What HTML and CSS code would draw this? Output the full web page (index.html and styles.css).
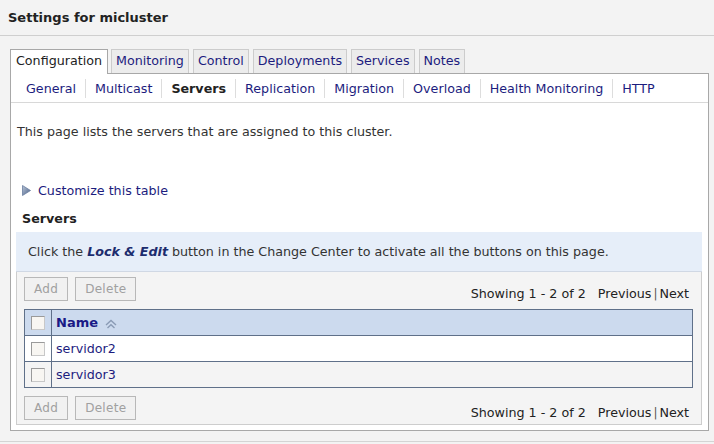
FILE: index.html
```html
<!DOCTYPE html>
<html>
<head>
<meta charset="utf-8">
<link rel="stylesheet" href="styles.css">
</head>
<body>
<div class="header"><h1 class="title">Settings for micluster</h1></div>
<div class="main">
  <div class="tabs">
    <span class="tab active">Configuration</span>
    <span class="tab">Monitoring</span>
    <span class="tab">Control</span>
    <span class="tab">Deployments</span>
    <span class="tab">Services</span>
    <span class="tab">Notes</span>
  </div>
  <div class="panel">
    <div class="subtabs">
      <span class="sub">General</span>
      <span class="sub">Multicast</span>
      <span class="sub current">Servers</span>
      <span class="sub">Replication</span>
      <span class="sub">Migration</span>
      <span class="sub">Overload</span>
      <span class="sub">Health Monitoring</span>
      <span class="sub last">HTTP</span>
    </div>
    <div class="content">
      <p class="intro">This page lists the servers that are assigned to this cluster.</p>
      <div class="customize">
        <svg class="tri" width="9" height="11" viewBox="0 0 9 11"><defs><linearGradient id="g" x1="0" y1="0" x2="1" y2="1"><stop offset="0" stop-color="#b9c6d8"/><stop offset="1" stop-color="#4a5f86"/></linearGradient></defs><path d="M0.5 0.5 L8.5 5.5 L0.5 10.5 Z" fill="url(#g)" stroke="#6a7ea0" stroke-width="0.8"/></svg>
        <span class="link">Customize this table</span>
      </div>
      <div class="section">Servers</div>
      <div class="info">Click the <b class="lock">Lock &amp; Edit</b> button in the Change Center to activate all the buttons on this page.</div>
      <div class="tablebox">
        <div class="controls">
          <div class="buttons"><span class="btn">Add</span><span class="btn">Delete</span></div>
          <div class="paging">Showing 1 - 2 of 2 <span class="pl">Previous</span><span class="bar">|</span>Next</div>
        </div>
        <table class="grid">
          <tr class="head"><th class="cb"><span class="box"></span></th><th class="name">Name <svg class="sort" width="14" height="10" viewBox="0 0 14 10"><path d="M2 6 L7 1.5 L12 6" fill="none" stroke="#8a9bb5" stroke-width="1.4"/><path d="M3.5 9 L7 5.8 L10.5 9" fill="none" stroke="#8a9bb5" stroke-width="1.4"/></svg></th></tr>
          <tr class="row odd"><td class="cb"><span class="box"></span></td><td><span class="link">servidor2</span></td></tr>
          <tr class="row even"><td class="cb"><span class="box"></span></td><td><span class="link">servidor3</span></td></tr>
        </table>
        <div class="controls bottom">
          <div class="buttons"><span class="btn">Add</span><span class="btn">Delete</span></div>
          <div class="paging">Showing 1 - 2 of 2 <span class="pl">Previous</span><span class="bar">|</span>Next</div>
        </div>
      </div>
    </div>
  </div>
</div>
</body>
</html>
```
FILE: styles.css
```css
html, body { margin: 0; padding: 0; }
body {
  background: #f3f3f3;
  font-family: "DejaVu Sans", "Liberation Sans", sans-serif;
  font-size: 12.7px;
  color: #333;
  width: 714px;
  height: 444px;
  overflow: hidden;
}
.header {
  height: 36px;
  border-bottom: 1px solid #cfcfcf;
  box-sizing: border-box;
  padding: 0 8px;
  display: flex;
  align-items: center;
}
.title { margin: 0; font-size: 13px; font-weight: bold; color: #222; }
.main { padding: 13px 5px 10px 10px; border-bottom: 1px solid #d4d4d4; }
.tabs { display: flex; gap: 4px; height: 24px; align-items: flex-end; }
.tab {
  height: 24px;
  box-sizing: border-box;
  border: 1px solid #cccccc;
  border-bottom: none;
  background: #ececec;
  color: #1c1c7e;
  padding: 0 4px;
  line-height: 22px;
}
.tab.active {
  height: 25px;
  background: #fff;
  color: #222;
  border-color: #a8a8a8;
  padding: 0 5px;
  margin-right: -1px;
  margin-bottom: -1px;
  position: relative;
  z-index: 1;
}
.panel {
  background: #fff;
  border: 1px solid #a8a8a8;
}
.subtabs {
  display: flex;
  align-items: center;
  height: 28px;
  border-bottom: 1px solid #d8d8d8;
  padding-left: 6px;
}
.sub {
  color: #1c1c7e;
  padding: 0 9px;
  border-right: 1px solid #dddddd;
  line-height: 19px;
  margin-top: 1px;
}
.sub.last { border-right: none; }
.sub.current { color: #222; font-weight: bold; }
.content { padding: 0 6px 5px 5px; }
.intro { margin: 20px 0 0 1px; height: 18px; line-height: 18px; }
.customize { margin: 40px 0 0 6px; display: flex; align-items: center; gap: 7px; height: 18px; }
.tri { display: block; }
.link { color: #1c1c7e; }
.section { margin: 11px 0 0 6px; font-weight: bold; color: #222; height: 18px; line-height: 18px; }
.info {
  margin-top: 4px;
  background: #e6eef9;
  height: 39px;
  line-height: 39px;
  padding-left: 12px;
  border-bottom: 1px solid #d0d8e4;
}
.lock { color: #1c2c6e; font-style: italic; }
.tablebox {
  background: #f4f4f4;
  border: 1px solid #cdcdcd;
  border-top: none;
  padding: 5px 8px 4px 7px;
}
.controls { display: flex; justify-content: space-between; align-items: center; height: 24px; }
.controls.bottom { margin-top: 8px; }
.buttons { display: flex; gap: 7px; }
.btn {
  height: 24px;
  box-sizing: border-box;
  border: 1px solid #b8b8b8;
  background: #f1f1f1;
  color: #a0a0a0;
  font-size: 12px;
  padding: 0 9px;
  line-height: 22px;
  letter-spacing: 0.3px;
}
.paging { color: #222; padding-top: 8px; padding-right: 4px; }
.pl { margin-left: 8px; }
.bar { color: #555; margin: 0 2px; font-size: 12px; }
.grid {
  margin-top: 8px;
  width: 100%;
  border-collapse: collapse;
  border: 1px solid #5f7089;
}
.grid th, .grid td {
  height: 25px;
  padding: 0 4px;
  border-bottom: 1px solid #5f7089;
  text-align: left;
}
.grid .cb { width: 18px; border-right: 1px solid #5f7089; text-align: center; }
.head th { background: #ccdaee; }
.name { color: #1a1a86; font-weight: bold; font-size: 13px; }
.sort { vertical-align: middle; margin-left: 1px; }
.row.odd td { background: #fff; }
.row.even td { background: #f4f4f4; }
.box {
  display: inline-block;
  width: 12px;
  height: 12px;
  border: 1px solid #9a9a9a;
  background: #f8f6f2;
  vertical-align: middle;
  border-right-color: #c8c8c8;
  border-bottom-color: #c8c8c8;
}
```
